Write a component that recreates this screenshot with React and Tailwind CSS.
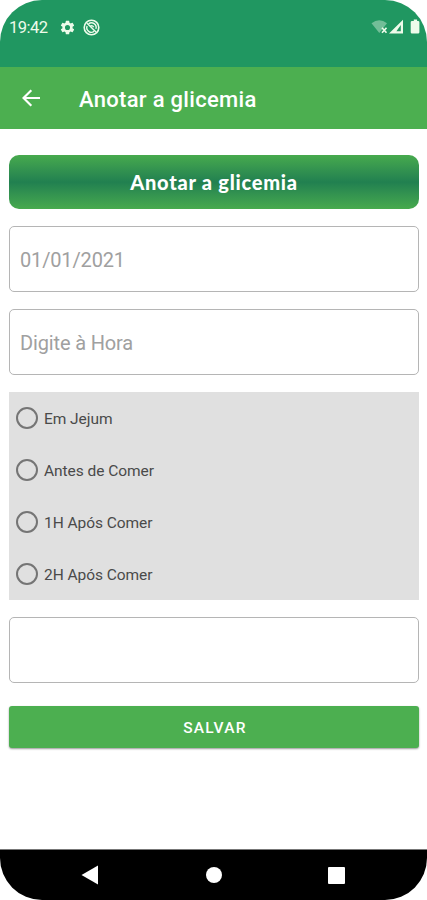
import React from "react";

const moments = ["Em Jejum", "Antes de Comer", "1H Após Comer", "2H Após Comer"];

function StatusBar() {
  return (
    <div className="flex h-[67px] shrink-0 items-start justify-between bg-[#209761] pl-[9px] pr-[7px] pt-[17px] text-[#eefbea]">
      <div className="flex h-5 items-center">
        <span className="mt-[2px] w-[49px] whitespace-nowrap text-[16.5px] leading-5 tracking-[-0.5px]">19:42</span>
        <svg className="ml-[1px]" width="17" height="17" viewBox="0 0 24 24" fill="currentColor">
          <path d="M19.14 12.94c.04-.3.06-.61.06-.94s-.02-.64-.07-.94l2.03-1.58a.49.49 0 0 0 .12-.61l-1.92-3.32a.49.49 0 0 0-.59-.22l-2.39.96a7 7 0 0 0-1.62-.94l-.36-2.54A.48.48 0 0 0 13.92 2.4h-3.84a.48.48 0 0 0-.47.41l-.36 2.54a7.4 7.4 0 0 0-1.62.94l-2.39-.96a.48.48 0 0 0-.59.22L2.74 8.87a.47.47 0 0 0 .12.61l2.03 1.58c-.05.3-.09.63-.09.94s.02.64.07.94l-2.03 1.58a.49.49 0 0 0-.12.61l1.92 3.32c.12.22.37.29.59.22l2.39-.96c.5.38 1.03.7 1.62.94l.36 2.54c.05.24.24.41.48.41h3.84c.24 0 .44-.17.47-.41l.36-2.54a7 7 0 0 0 1.62-.94l2.39.96c.22.08.47 0 .59-.22l1.92-3.32a.47.47 0 0 0-.12-.61zM12 15.6a3.6 3.6 0 1 1 0-7.2 3.6 3.6 0 0 1 0 7.2z" />
        </svg>
        <svg className="ml-[7px]" width="17" height="17" viewBox="0 0 17 17" fill="none" stroke="currentColor">
          <circle cx="8.5" cy="8.5" r="7.3" strokeWidth="1.6" />
          <path d="M5.6 4.9a4.6 4.6 0 0 1 7.3 5M11.2 12.3a4.6 4.6 0 0 1-7.1-5.3" strokeWidth="1.4" />
          <path d="M4 4.2l9 8.8M7.4 7.3a2 2 0 0 1 3.2 1" strokeWidth="1.4" />
        </svg>
      </div>
      <div className="flex h-5 items-center">
        <svg width="49" height="16" viewBox="0 0 49 16" fill="currentColor">
          <path d="M.5 4.2Q8.3-1.8 16 4.2L8.3 14z" opacity=".4" />
          <path d="M11 8.8l4.500 5M15.500 8.800l-4.500 5" stroke="currentColor" strokeWidth="1.7" />
          <path fillRule="evenodd" d="M18 14.5L32 .8v13.7zM25.4 12.3h4.400V6z" />
          <path d="M41 1.9h1.8V.5h3.3v1.4h1q1.3 0 1.3 1.3v10q0 1.3-1.3 1.3H41q-1.300 0-1.300-1.300v-10Q39.700 1.900 41 1.900z" />
        </svg>
      </div>
    </div>
  );
}

function AppBar() {
  return (
    <header className="flex h-[62px] shrink-0 items-center bg-[#4caf50] pl-[22px] text-white">
      <svg width="19" height="18" viewBox="0 0 19 18" fill="none" stroke="currentColor" strokeWidth="2.2">
        <path d="M18 9H2M9.3 1.2L1.5 9l7.8 7.8" />
      </svg>
      <h1 className="ml-[38px] mt-[3px] whitespace-nowrap text-[22px] font-medium leading-7 tracking-[0.3px]">Anotar a glicemia</h1>
    </header>
  );
}

function Field({ text }) {
  return (
    <div className="flex h-[66px] w-full items-center rounded-[5px] border border-[#b5b5b5] bg-white pl-[10px] pt-[2px] text-[20px] tracking-[-0.15px] text-[#a0a0a0]">
      {text}
    </div>
  );
}

function BottomNav() {
  return (
    <nav className="mt-auto flex h-[51px] shrink-0 items-center justify-between border-t border-[#777] bg-black px-[81px]">
      <svg width="18" height="20" viewBox="0 0 18 20" fill="white"><path d="M17 .5v19L.5 10z" /></svg>
      <div className="ml-[1px] size-4 rounded-full bg-white" />
      <div className="mr-[1px] size-[17px] rounded-[1px] bg-white" />
    </nav>
  );
}

export default function App() {
  return (
    <div className="h-[900px] w-[427px] bg-white font-['Roboto',sans-serif]">
      <div className="flex h-full flex-col overflow-hidden rounded-[42px] bg-white">
        <StatusBar />
        <AppBar />
        <main className="flex flex-col pl-[9px] pr-2 pt-[26px]">
          <div className="flex h-[54px] items-center justify-center rounded-[10px] bg-linear-to-b from-[#47aa4d] via-[#218050] to-[#47aa4d]">
            <span className="whitespace-nowrap font-['Lato',sans-serif] text-[20px] font-black leading-6 tracking-[0.75px] text-white">Anotar a glicemia</span>
          </div>
          <div className="mt-[17px] flex flex-col gap-[17px]">
            <Field text="01/01/2021" />
            <Field text="Digite à Hora" />
            <div className="flex h-[208px] flex-col bg-[#e0e0e0]">
              {moments.map((label) => (
                <label key={label} className="flex h-[52px] items-center pl-[7px]">
                  <span className="size-[22px] rounded-full border-2 border-[#757575]" />
                  <span className="ml-[6px] mt-[2px] whitespace-nowrap text-[15.5px] leading-5 tracking-[-0.05px] text-[#4a4a4a]">{label}</span>
                </label>
              ))}
            </div>
            <Field text="" />
          </div>
          <button className="mt-[23px] h-[42px] rounded-[3px] bg-[#4caf50] pl-[2px] pt-[1px] text-[15.5px] font-medium leading-5 tracking-[1.25px] text-white shadow-[0_1px_2px_rgba(0,0,0,0.4)]">SALVAR</button>
        </main>
        <BottomNav />
      </div>
    </div>
  );
}
